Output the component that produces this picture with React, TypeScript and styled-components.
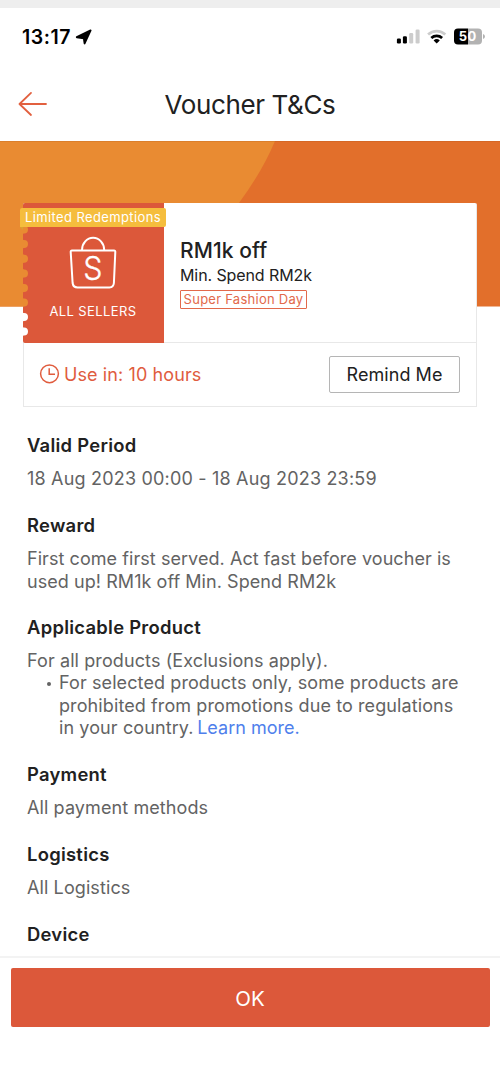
import React from "react";
import styled, { createGlobalStyle } from "styled-components";

const Global = createGlobalStyle`
  * { box-sizing: border-box; }
  body { margin: 0; background: #fff; font-family: Inter, "Liberation Sans", sans-serif; color: #212121; }
  button { font-family: inherit; margin: 0; padding: 0; }
`;

const Screen = styled.div`
  width: 500px;
  height: 1083px;
  display: flex;
  flex-direction: column;
  overflow: hidden;
  background: #fff;
  border-top: 8px solid #eee;
`;

const StatusBar = styled.div`
  height: 58px;
  flex: none;
  display: flex;
  align-items: center;
  padding: 0 15px 0 22px;
`;

const Time = styled.span`
  font-size: 19.5px;
  font-weight: 600;
  color: #000;
  letter-spacing: 0.55px;
  white-space: nowrap;
`;

const LocationIcon = styled.svg`
  margin-left: 4px;
`;

const StatusIcons = styled.svg`
  margin-left: auto;
`;

const NavBar = styled.header`
  position: relative;
  height: 75px;
  flex: none;
  display: flex;
  align-items: center;
  justify-content: center;
`;

const BackButton = styled.button`
  position: absolute;
  left: 18px;
  top: 25px;
  width: 30px;
  height: 26px;
  border: 0;
  background: none;
  display: flex;
`;

const NavTitle = styled.h1`
  margin: 0;
  padding-top: 2px;
  font-size: 26px;
  font-weight: 400;
  line-height: 32px;
  letter-spacing: -0.38px;
`;

const Hero = styled.section`
  position: relative;
  flex: none;
  padding: 62px 23px 0;
`;

const Backdrop = styled.svg`
  position: absolute;
  left: 0;
  top: 0;
`;

const Card = styled.article`
  position: relative;
  height: 204px;
  background: #fff;
  border: 1px solid #e8e8e8;
  border-top: 0;
  border-radius: 2px 2px 0 0;
  display: flex;
  flex-direction: column;
`;

const Summary = styled.div`
  height: 140px;
  display: flex;
  margin-left: -1px;
  border-bottom: 1px solid #e8e8e8;
`;

const Stub = styled.div`
  position: relative;
  width: 141px;
  height: 140px;
  display: flex;
  flex-direction: column;
  align-items: center;
  padding: 33px 1px 0 0;
`;

const StubShape = styled.svg`
  position: absolute;
  left: 0;
  top: 0;
`;

const Bag = styled.svg`
  position: relative;
`;

const StubLabel = styled.span`
  position: relative;
  margin-top: 12px;
  font-size: 13px;
  line-height: 18px;
  letter-spacing: 0.4px;
  color: #fff;
  white-space: nowrap;
`;

const Ribbon = styled.span`
  position: absolute;
  left: -3px;
  top: 5px;
  width: 146px;
  height: 19px;
  border-radius: 2px 2px 2px 0;
  background: #f5bd3d;
  color: #fff;
  font-size: 13px;
  line-height: 19px;
  letter-spacing: 0.38px;
  text-align: center;
  white-space: nowrap;
  &::after {
    content: "";
    position: absolute;
    left: 0;
    top: 19px;
    border-top: 3px solid #d9a22f;
    border-left: 3px solid transparent;
  }
`;

const Offer = styled.div`
  padding: 34px 0 0 16px;
  display: flex;
  flex-direction: column;
  align-items: flex-start;
`;

const OfferTitle = styled.h2`
  margin: 0;
  font-size: 21px;
  font-weight: 500;
  line-height: 27px;
  letter-spacing: 0.1px;
`;

const OfferText = styled.p`
  margin: 0;
  font-size: 16px;
  line-height: 23px;
  letter-spacing: -0.1px;
`;

const Tag = styled.span`
  margin-top: 3px;
  width: 127px;
  height: 19px;
  border: 1px solid #e2694b;
  border-radius: 1px;
  color: #e2694b;
  font-size: 13px;
  line-height: 17px;
  letter-spacing: 0.26px;
  text-align: center;
  white-space: nowrap;
`;

const ActionRow = styled.div`
  flex: 1;
  display: flex;
  align-items: center;
  padding: 0 16px 1px 15px;
`;

const Countdown = styled.span`
  display: flex;
  align-items: center;
  gap: 4px;
  color: #e05c3e;
  font-size: 18px;
  letter-spacing: 0.1px;
`;

const RemindButton = styled.button`
  margin-left: auto;
  width: 131px;
  height: 37px;
  border: 1px solid #b5b5b5;
  border-radius: 2px;
  background: #fff;
  color: #212121;
  font-size: 18px;
  letter-spacing: 0.05px;
`;

const Terms = styled.main`
  flex: 1;
  min-height: 0;
  overflow: hidden;
  padding: 27px 27px 0;
  display: flex;
  flex-direction: column;
  gap: 23.5px;
`;

const Term = styled.section`
  flex: none;
  display: flex;
  flex-direction: column;
  gap: 11.5px;
  &:nth-child(3) {
    margin-top: -0.75px;
  }
`;

const TermTitle = styled.h3`
  margin: 0;
  font-size: 18.4px;
  font-weight: 600;
  line-height: 22.5px;
  letter-spacing: 0.27px;
`;

const TermBody = styled.div<{ $tracking?: number }>`
  font-size: 18px;
  line-height: 22.5px;
  color: #636363;
  letter-spacing: ${(p) => p.$tracking ?? 0.1}px;
  white-space: nowrap;
`;

const Bullet = styled.div`
  position: relative;
  padding-left: 32px;
  &::before {
    content: "";
    position: absolute;
    left: 20px;
    top: 10px;
    width: 4px;
    height: 4px;
    border-radius: 50%;
    background: #636363;
  }
`;

const Link = styled.a`
  color: #4f7fec;
  margin-left: -1.5px;
  letter-spacing: 0;
`;

const Footer = styled.footer`
  flex: none;
  height: 127px;
  border-top: 2px solid #f3f3f3;
  padding: 10px 10.5px 0;
`;

const OkButton = styled.button`
  display: block;
  width: 100%;
  height: 59px;
  border: 0;
  border-radius: 2px;
  background: #dc583a;
  color: #fff;
  font-size: 20.5px;
  padding-top: 1px;
`;

const notches = [26.5, 41, 55.7, 70.4, 85, 99.6, 114, 128.5];

// Right-hand half circles bitten out of the stub's left edge.
const notchPath = notches.map((y) => `M-1 ${y - 5}Q0.3 ${y - 4} 1 ${y - 4}A4 4 0 0 1 1 ${y + 4}Q0.3 ${y + 4} -1 ${y + 5}Z`);

export default function App() {
  return (
    <>
      <Global />
      <Screen>
        <StatusBar>
          <Time>13:17</Time>
          <LocationIcon width="17" height="17" viewBox="0 0 17 17">
            <path d="M15.6 1.4 9.6 14.4 8.8 9.2 1.8 8.2Z" fill="#000" stroke="#000" strokeWidth="1.9" strokeLinejoin="round" />
          </LocationIcon>
          <StatusIcons width="89" height="18" viewBox="396 28 89 18">
            <rect x="396.9" y="38.5" width="4" height="5" rx="1.2" />
            <rect x="402.9" y="36.2" width="4" height="7.3" rx="1.2" />
            <rect x="409.2" y="33" width="4" height="10.5" rx="1.2" fill="#ccc" />
            <rect x="415.6" y="29.5" width="4" height="14" rx="1.2" fill="#ccc" />
            <g fill="none" strokeWidth="2.7">
              <path d="M428.1 34.6A12.5 12.5 0 0 1 445.3 34.6" stroke="#ccc" />
              <path d="M431.3 38A7.9 7.9 0 0 1 442.1 38" stroke="#000" />
            </g>
            <path d="M433.6 40.5A4.6 4.6 0 0 1 439.8 40.5L436.7 43.5Z" />
            <path d="M468 28.4H458Q454 28.4 454 32.4V40.6Q454 44.6 458 44.6H468Z" />
            <path d="M468 28.4H478Q482 28.4 482 32.4V40.6Q482 44.6 478 44.6H468Z" fill="#b2b2b2" />
            <path d="M483 34Q485 34.7 485 36.5T483 39Z" fill="#b2b2b2" />
            <text x="467.8" y="41.2" textAnchor="middle" fontSize="13" fontWeight="700" letterSpacing="0.4" fill="#fff">50</text>
          </StatusIcons>
        </StatusBar>

        <NavBar>
          <BackButton aria-label="Back">
            <svg width="30" height="26" viewBox="0 0 30 26" fill="none" stroke="#e2603f" strokeWidth="1.8" strokeLinecap="round" strokeLinejoin="round">
              <path d="M13 1.9 1.5 13 13 24M1.5 13H28" />
            </svg>
          </BackButton>
          <NavTitle>Voucher T&amp;Cs</NavTitle>
        </NavBar>

        <Hero>
          <Backdrop width="500" height="165.5" viewBox="0 0 500 165.5">
            <rect width="500" height="165.5" fill="#e26f2b" />
            <path d="M0 0H275Q262 31 239 62L200 105 110 165.5H0Z" fill="#e98b32" />
            <rect width="500" height="1" fill="#8a3c10" opacity="0.15" />
          </Backdrop>
          <Card>
            <Summary>
              <Stub>
                <StubShape width="141" height="140" viewBox="0 0 141 140">
                  <path d="M2 0H141V140H2Q0 140 0 138V2Q0 0 2 0Z" fill="#dc583a" />
                  {notchPath.map((d, i) => (
                    <path key={d} d={d} fill={i < 6 ? "#e98b32" : "#fff"} />
                  ))}
                </StubShape>
                <Bag width="48" height="54" viewBox="0 0 48 54" fill="none" stroke="#fff" strokeWidth="2" strokeLinejoin="round">
                  <path d="M3 14.5H45Q46.4 14.5 46.3 16L44.9 47Q44.5 51.4 40.5 51.4H8.5Q4.2 51.4 3.6 47L1.7 16Q1.6 14.5 3 14.5Z" />
                  <path d="M13 14A11.1 12.3 0 0 1 35.2 14" />
                  <text transform="translate(23.8 44.2) scale(.92 1)" textAnchor="middle" fontSize="33" fontWeight="300" fill="#fff" strokeWidth=".35">S</text>
                </Bag>
                <StubLabel>ALL SELLERS</StubLabel>
                <Ribbon>Limited Redemptions</Ribbon>
              </Stub>
              <Offer>
                <OfferTitle>RM1k off</OfferTitle>
                <OfferText>Min. Spend RM2k</OfferText>
                <Tag>Super Fashion Day</Tag>
              </Offer>
            </Summary>
            <ActionRow>
              <Countdown>
                <svg width="21" height="21" viewBox="0 0 21 21" fill="none" stroke="#e05c3e" strokeWidth="1.5">
                  <circle cx="10.5" cy="9.8" r="8.9" />
                  <path d="M10.2 4.2V10.2H16" />
                </svg>
                Use in: 10 hours
              </Countdown>
              <RemindButton>Remind Me</RemindButton>
            </ActionRow>
          </Card>
        </Hero>

        <Terms>
          <Term>
            <TermTitle>Valid Period</TermTitle>
            <TermBody $tracking={0.19}>18 Aug 2023 00:00 - 18 Aug 2023 23:59</TermBody>
          </Term>
          <Term>
            <TermTitle>Reward</TermTitle>
            <TermBody $tracking={0.06}>
              First come first served. Act fast before voucher is
              <br />
              used up! RM1k off Min. Spend RM2k
            </TermBody>
          </Term>
          <Term>
            <TermTitle>Applicable Product</TermTitle>
            <TermBody>
              For all products (Exclusions apply).
              <Bullet>
                For selected products only, some products are
                <br />
                prohibited from promotions due to regulations
                <br />
                in your country. <Link>Learn more.</Link>
              </Bullet>
            </TermBody>
          </Term>
          <Term>
            <TermTitle>Payment</TermTitle>
            <TermBody>All payment methods</TermBody>
          </Term>
          <Term>
            <TermTitle>Logistics</TermTitle>
            <TermBody>All Logistics</TermBody>
          </Term>
          <Term>
            <TermTitle>Device</TermTitle>
          </Term>
        </Terms>

        <Footer>
          <OkButton>OK</OkButton>
        </Footer>
      </Screen>
    </>
  );
}
